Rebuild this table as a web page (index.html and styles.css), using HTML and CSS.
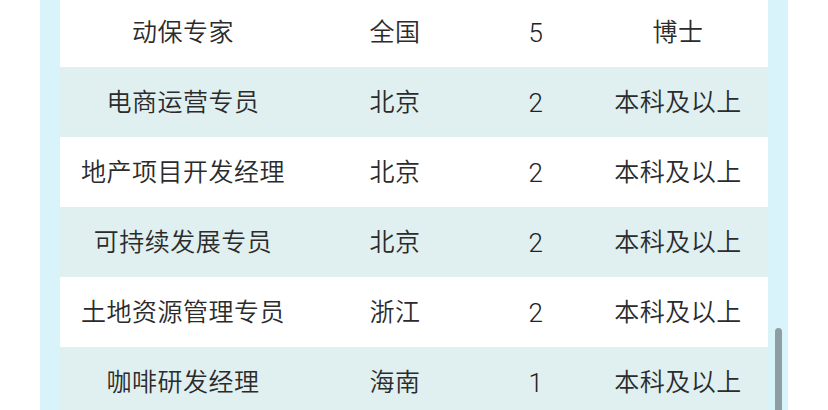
FILE: index.html
```html
<!DOCTYPE html>
<html lang="zh">
<head>
<meta charset="utf-8">
<link rel="stylesheet" href="styles.css">
</head>
<body>
<div class="frame">
  <div class="table">
    <div class="row"><div class="c1">动保专家</div><div class="c2">全国</div><div class="c3">5</div><div class="c4">博士</div></div>
    <div class="row alt"><div class="c1">电商运营专员</div><div class="c2">北京</div><div class="c3">2</div><div class="c4">本科及以上</div></div>
    <div class="row"><div class="c1">地产项目开发经理</div><div class="c2">北京</div><div class="c3">2</div><div class="c4">本科及以上</div></div>
    <div class="row alt"><div class="c1">可持续发展专员</div><div class="c2">北京</div><div class="c3">2</div><div class="c4">本科及以上</div></div>
    <div class="row"><div class="c1">土地资源管理专员</div><div class="c2">浙江</div><div class="c3">2</div><div class="c4">本科及以上</div></div>
    <div class="row alt"><div class="c1">咖啡研发经理</div><div class="c2">海南</div><div class="c3">1</div><div class="c4">本科及以上</div></div>
  </div>
  <div class="scrollbar"></div>
</div>
</body>
</html>
```

FILE: styles.css
```css
html, body {
  margin: 0;
  padding: 0;
  background: #ffffff;
}
body {
  width: 828px;
  height: 410px;
  overflow: hidden;
  font-family: Roboto, "Noto Sans CJK SC", "Noto Sans", sans-serif;
  color: #2b2b2b;
}
.frame {
  position: relative;
  margin: 0 40px;
  height: 410px;
  padding: 0 20px;
  background: #d8f4fa;
  overflow: hidden;
}
.table {
  width: 708px;
  margin-top: -3px;
}
.row {
  display: grid;
  grid-template-columns: 246px 178px 104px 180px;
  height: 70px;
  align-items: center;
  background: #ffffff;
  font-size: 25px;
  font-weight: 350;
  letter-spacing: 0.5px;
  line-height: 30px;
  padding-top: 2px;
  box-sizing: border-box;
}
.row.alt {
  background: #e0eff0;
}
.row > div {
  text-align: center;
  white-space: nowrap;
}
.row > .c3 {
  font-weight: 300;
  font-size: 26px;
  color: #222222;
}
.scrollbar {
  position: absolute;
  left: 735px;
  top: 328px;
  width: 7px;
  height: 100px;
  border-radius: 4px;
  background: #8e9ea3;
}
```
